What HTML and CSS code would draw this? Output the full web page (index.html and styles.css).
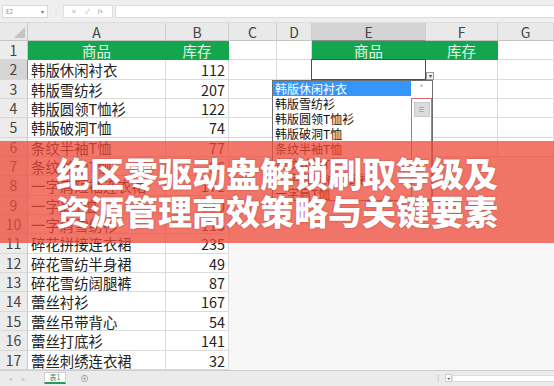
FILE: index.html
```html
<!DOCTYPE html>
<html lang="zh-CN">
<head>
<meta charset="utf-8">
<title>Excel</title>
<link rel="stylesheet" href="styles.css">
</head>
<body>
<div class="toolbar">
  <div class="namebox"><span>E2</span><span class="nb-arrow">▾</span></div>
  <div class="tb-sep">⋮</div>
  <div class="fxbox"><span>✕</span><span>✓</span><span class="fx">fx</span></div>
  <div class="formula"></div>
</div>

<div class="sheet">
  <div class="row head">
    <div class="rh corner"><i></i></div>
    <div class="cell a">A</div><div class="cell b">B</div><div class="cell c">C</div><div class="cell d">D</div><div class="cell e sel">E</div><div class="cell f">F</div><div class="cell g">G</div>
  </div>
  <div class="row">
    <div class="rh">1</div>
    <div class="cell a green">商品</div><div class="cell b green">库存</div><div class="cell c"></div><div class="cell d"></div><div class="cell e green">商品</div><div class="cell f green">库存</div><div class="cell g"></div>
  </div>
  <div class="row">
    <div class="rh sel">2</div>
    <div class="cell a">韩版休闲衬衣</div><div class="cell b">112</div><div class="cell c"></div><div class="cell d"></div><div class="cell e"></div><div class="cell f"></div><div class="cell g"></div>
  </div>
  <div class="row">
    <div class="rh">3</div>
    <div class="cell a">韩版雪纺衫</div><div class="cell b">207</div><div class="cell c"></div><div class="cell d"></div><div class="cell e"></div><div class="cell f"></div><div class="cell g"></div>
  </div>
  <div class="row">
    <div class="rh">4</div>
    <div class="cell a">韩版圆领T恤衫</div><div class="cell b">122</div><div class="cell c"></div><div class="cell d"></div><div class="cell e"></div><div class="cell f"></div><div class="cell g"></div>
  </div>
  <div class="row">
    <div class="rh">5</div>
    <div class="cell a">韩版破洞T恤</div><div class="cell b">74</div><div class="cell c"></div><div class="cell d"></div><div class="cell e"></div><div class="cell f"></div><div class="cell g"></div>
  </div>
  <div class="row">
    <div class="rh">6</div>
    <div class="cell a">条纹半袖T恤</div><div class="cell b">77</div><div class="cell c"></div><div class="cell d"></div><div class="cell e"></div><div class="cell f"></div><div class="cell g"></div>
  </div>
  <div class="row">
    <div class="rh">7</div>
    <div class="cell a">条纹长袖T恤</div><div class="cell b">96</div><div class="blank"></div>
  </div>
  <div class="row">
    <div class="rh">8</div>
    <div class="cell a">一字肩短袖连衣裙</div><div class="cell b">171</div><div class="blank"></div>
  </div>
  <div class="row">
    <div class="rh">9</div>
    <div class="cell a">一字肩T恤</div><div class="cell b">120</div><div class="blank"></div>
  </div>
  <div class="row">
    <div class="rh">10</div>
    <div class="cell a">一字肩雪纺衫</div><div class="cell b">115</div><div class="blank"></div>
  </div>
  <div class="row">
    <div class="rh">11</div>
    <div class="cell a">碎花拼接连衣裙</div><div class="cell b">235</div><div class="blank"></div>
  </div>
  <div class="row">
    <div class="rh">12</div>
    <div class="cell a">碎花雪纺半身裙</div><div class="cell b">49</div><div class="blank"></div>
  </div>
  <div class="row">
    <div class="rh">13</div>
    <div class="cell a">碎花雪纺阔腿裤</div><div class="cell b">87</div><div class="blank"></div>
  </div>
  <div class="row">
    <div class="rh">14</div>
    <div class="cell a">蕾丝衬衫</div><div class="cell b">167</div><div class="blank"></div>
  </div>
  <div class="row">
    <div class="rh">15</div>
    <div class="cell a">蕾丝吊带背心</div><div class="cell b">54</div><div class="blank"></div>
  </div>
  <div class="row">
    <div class="rh">16</div>
    <div class="cell a">蕾丝打底衫</div><div class="cell b">141</div><div class="blank"></div>
  </div>
  <div class="row">
    <div class="rh">17</div>
    <div class="cell a">蕾丝刺绣连衣裙</div><div class="cell b">32</div><div class="blank"></div>
  </div>
</div>

<div class="tabbar">
  <span class="nav">◂</span><span class="nav">▸</span>
  <span class="tab">表1</span>
  <span class="add">⊕</span>
  <span class="spacer"></span>
  <span class="hs-grip">⁞</span>
  <span class="hs-btn">◂</span>
  <span class="hs-track"></span>
</div>

<!-- overlays -->
<div class="selection"></div>
<div class="dd-btn">▾</div>
<div class="dropdown">
  <ul class="items">
    <li class="hl">韩版休闲衬衣</li>
    <li>韩版雪纺衫</li>
    <li>韩版圆领T恤衫</li>
    <li>韩版破洞T恤</li>
    <li>条纹半袖T恤</li>
    <li>条纹长袖T恤</li>
    <li>一字肩短袖连衣裙</li>
    <li>一字肩T恤</li>
  </ul>
  <div class="scroll">
    <span class="up">˄</span>
    <span class="thumb">≡</span>
    <span class="down">˅</span>
  </div>
</div>

<div class="banner">
  <p>绝区零驱动盘解锁刷取等级及</p>
  <p>资源管理高效策略与关键要素</p>
</div>
</body>
</html>
```

FILE: styles.css
```css
* { box-sizing: border-box; margin: 0; padding: 0; }
html, body { width: 554px; height: 386px; overflow: hidden; }
body {
  position: relative;
  font-family: "Noto Sans CJK SC", "Noto Sans", sans-serif;
  background: #f7f7f7;
  color: #222;
}

/* toolbar */
.toolbar {
  height: 23px;
  display: flex;
  align-items: flex-start;
  padding: 5px 0 0 2px;
  background: #efefef;
  border-bottom: 1px solid #dcdcdc;
}
.namebox {
  width: 46px; height: 13px;
  background: #fff; border: 1px solid #d8d8d8;
  display: flex; justify-content: space-between; align-items: center;
  padding: 0 3px;
  font-size: 6px; color: #888; line-height: 1;
}
.nb-arrow { font-size: 6px; color: #777; }
.tb-sep { width: 15px; text-align: center; font-size: 8px; color: #ccc; line-height: 13px; }
.fxbox {
  width: 50px; height: 13px;
  background: #fff; border: 1px solid #e0e0e0;
  display: flex; align-items: center; gap: 8px;
  padding-left: 7px;
  font-size: 7px; color: #bbb; line-height: 1;
}
.fxbox .fx { font-style: italic; font-family: "Liberation Serif", serif; color: #999; }
.formula {
  flex: 1; height: 13px; margin-left: 2px;
  background: #fff; border: 1px solid #dcdcdc; border-right: none;
}

/* sheet */
.sheet { display: flex; flex-direction: column; }
.row { display: flex; height: 19.35px; }
.row.head { height: 18px; }
.rh {
  width: 28px; flex: none;
  background: #ececec;
  border-right: 1px solid #c8c8c8; border-bottom: 1px solid #d8d8d8;
  font-size: 14px; line-height: 19px; text-align: center; color: #444;
}
.rh.sel { background: #d5d5d5; border-right: 1px solid #8c8c8c; }
.cell {
  flex: none;
  background: #fff;
  border-right: 1px solid #dadada; border-bottom: 1px solid #dadada;
  font-size: 14.4px; line-height: 19px;
  white-space: nowrap;
}
.a { width: 138px; padding-left: 3px; }
.b { width: 63px; text-align: right; padding-right: 3px; }
.c { width: 48px; }
.d { width: 35px; }
.e { width: 114px; }
.f { width: 72px; }
.g { flex: 1; }
.head .rh { line-height: 18px; }
.head .cell {
  background: #e9e9e9;
  border-right: 1px solid #cfcfcf; border-bottom: 1px solid #c4c4c4;
  text-align: center; padding: 0;
  font-size: 14px; line-height: 18px; color: #444;
}
.head .cell.sel { background: #d4d4d4; border-bottom: 1px solid #8c8c8c; }
.head .g { flex: 1; }
.corner { background: #e9e9e9; border-bottom: 1px solid #c4c4c4; position: relative; }
.corner i {
  position: absolute; right: 2px; bottom: 2px;
  width: 0; height: 0;
  border-left: 11px solid transparent;
  border-bottom: 11px solid #c3c3c3;
}
.cell.green {
  background: #13a64f; color: #e6f6ea;
  border-right-color: #13a64f; border-bottom-color: #13a64f;
  text-align: center; padding: 0;
}
.blank { flex: 1; background: #f7f7f7; }

/* tab bar */
.tabbar {
  height: 16px;
  display: flex; align-items: center;
  background: #ebebeb;
  border-top: 1px solid #cdcdcd;
  padding-left: 9px;
  font-size: 7px; color: #c0c0c0;
}
.nav { width: 13px; font-size: 6px; }
.tab {
  margin-left: 9px;
  width: 22px; height: 12px;
  background: #fff;
  border: 1px solid #d0d0d0; border-bottom: 2px solid #2a9a57;
  font-size: 7px; line-height: 9px; text-align: center; color: #3a8a5a;
}
.add { margin-left: 14px; font-size: 9px; color: #999; }
.spacer { flex: 1; }
.hs-grip { width: 8px; color: #aaa; font-size: 8px; }
.hs-btn {
  width: 7px; height: 8px;
  background: #fff; border: 1px solid #ccc;
  font-size: 5px; line-height: 6px; text-align: center; color: #555;
}
.hs-track { width: 102px; height: 7px; background: #fff; border: 1px solid #dedede; border-right: none; }

/* overlays */
.selection {
  position: absolute; left: 311px; top: 59px;
  width: 115px; height: 21px;
  border: 1px solid #1d6a3d;
}
.dd-btn {
  position: absolute; left: 426px; top: 72px;
  width: 8px; height: 8px;
  background: #f2f2f2; border: 1px solid #9a9a9a;
  font-size: 6px; line-height: 6px; text-align: center; color: #444;
}
.dropdown {
  position: absolute; left: 272px; top: 80px;
  width: 161px; height: 121px;
  background: #fff;
  border: 1px solid #6f6f6f;
  display: flex;
}
.items { list-style: none; flex: 1; }
.items li {
  height: 15px; line-height: 15px;
  padding-left: 2px;
  font-size: 12px; color: #111;
  white-space: nowrap;
}
.items li.hl { background: #3595fb; color: #fff; }
.scroll {
  width: 21px; position: relative;
  border: 1px solid #d86a6a; border-top: none;
  margin-top: 17px;
  display: flex; flex-direction: column; align-items: center;
}
.scroll .up {
  position: absolute; top: -15px; left: 0; right: 0;
  text-align: center; font-size: 10px; line-height: 12px; color: #333;
}
.scroll .thumb {
  margin-top: 4px;
  width: 16px; height: 15px;
  background: #dcdcdc; border: 1px solid #c8c8c8;
  font-size: 7px; line-height: 13px; text-align: center; color: #888;
}
.scroll .down {
  margin-top: auto; margin-bottom: 2px;
  font-size: 10px; line-height: 10px; color: #333;
}
.scroll::before {
  content: ""; position: absolute; top: 0; left: -1px; right: -1px;
  border-top: 1px solid #d86a6a;
}

.banner {
  position: absolute; left: 0; right: 0; top: 141px;
  height: 102px;
  background: rgba(239, 72, 56, 0.75);
  display: flex; flex-direction: column; justify-content: center; align-items: center;
  color: #fff;
  font-size: 34px; line-height: 38px; font-weight: 900;
  text-shadow: 0 0 2px rgba(90, 20, 10, 0.45);
  white-space: nowrap;
}
```
